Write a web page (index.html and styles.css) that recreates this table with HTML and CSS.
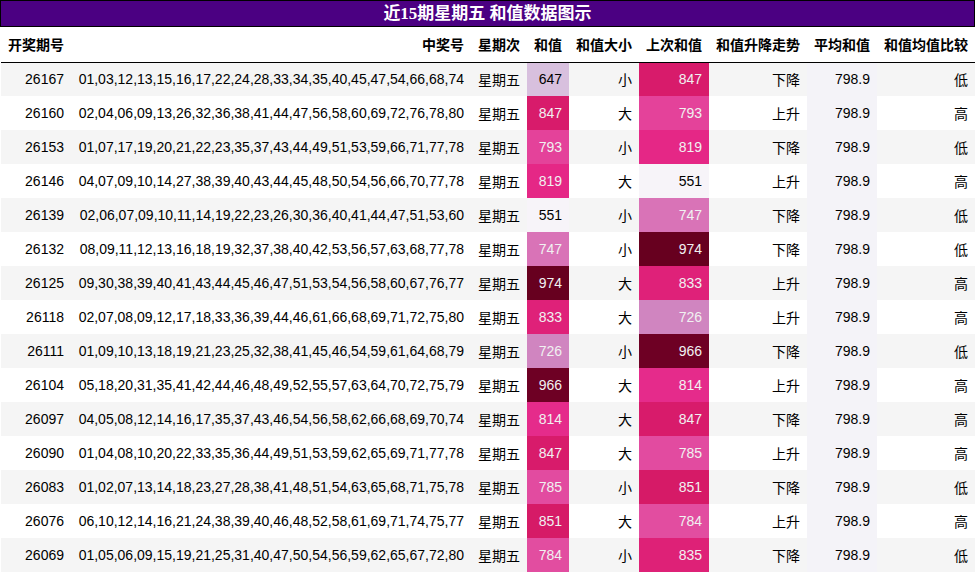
FILE: index.html
```html
<!DOCTYPE html>
<html lang="zh">
<head>
<meta charset="utf-8">
<title>近15期星期五 和值数据图示</title>
<link rel="stylesheet" href="styles.css">
</head>
<body>
<div class="wrap">
  <div class="title">近15期星期五 和值数据图示</div>
  <table class="grid">
    <thead>
      <tr>
        <th class="left">开奖期号</th>
        <th class="nums">中奖号</th>
        <th>星期次</th>
        <th>和值</th>
        <th>和值大小</th>
        <th>上次和值</th>
        <th>和值升降走势</th>
        <th>平均和值</th>
        <th>和值均值比较</th>
      </tr>
    </thead>
    <tbody>
      <tr><td>26167</td><td>01,03,12,13,15,16,17,22,24,28,33,34,35,40,45,47,54,66,68,74</td><td>星期五</td><td style="background:#d8c0de">647</td><td>小</td><td class="lt" style="background:#d81b6b">847</td><td>下降</td><td class="avg">798.9</td><td>低</td></tr>
      <tr><td>26160</td><td>02,04,06,09,13,26,32,36,38,41,44,47,56,58,60,69,72,76,78,80</td><td>星期五</td><td class="lt" style="background:#d81b6b">847</td><td>大</td><td class="lt" style="background:#e4429a">793</td><td>上升</td><td class="avg">798.9</td><td>高</td></tr>
      <tr><td>26153</td><td>01,07,17,19,20,21,22,23,35,37,43,44,49,51,53,59,66,71,77,78</td><td>星期五</td><td class="lt" style="background:#e4429a">793</td><td>小</td><td class="lt" style="background:#e52786">819</td><td>下降</td><td class="avg">798.9</td><td>低</td></tr>
      <tr><td>26146</td><td>04,07,09,10,14,27,38,39,40,43,44,45,48,50,54,56,66,70,77,78</td><td>星期五</td><td class="lt" style="background:#e52786">819</td><td>大</td><td style="background:#f7f4f9">551</td><td>上升</td><td class="avg">798.9</td><td>高</td></tr>
      <tr><td>26139</td><td>02,06,07,09,10,11,14,19,22,23,26,30,36,40,41,44,47,51,53,60</td><td>星期五</td><td style="background:#f7f4f9">551</td><td>小</td><td class="lt" style="background:#d973b7">747</td><td>下降</td><td class="avg">798.9</td><td>低</td></tr>
      <tr><td>26132</td><td>08,09,11,12,13,16,18,19,32,37,38,40,42,53,56,57,63,68,77,78</td><td>星期五</td><td class="lt" style="background:#d973b7">747</td><td>小</td><td class="lt" style="background:#67001f">974</td><td>下降</td><td class="avg">798.9</td><td>低</td></tr>
      <tr><td>26125</td><td>09,30,38,39,40,41,43,44,45,46,47,51,53,54,56,58,60,67,76,77</td><td>星期五</td><td class="lt" style="background:#67001f">974</td><td>大</td><td class="lt" style="background:#df2179">833</td><td>上升</td><td class="avg">798.9</td><td>高</td></tr>
      <tr><td>26118</td><td>02,07,08,09,12,17,18,33,36,39,44,46,61,66,68,69,71,72,75,80</td><td>星期五</td><td class="lt" style="background:#df2179">833</td><td>大</td><td class="lt" style="background:#d085c0">726</td><td>上升</td><td class="avg">798.9</td><td>高</td></tr>
      <tr><td>26111</td><td>01,09,10,13,18,19,21,23,25,32,38,41,45,46,54,59,61,64,68,79</td><td>星期五</td><td class="lt" style="background:#d085c0">726</td><td>小</td><td class="lt" style="background:#6e0024">966</td><td>下降</td><td class="avg">798.9</td><td>低</td></tr>
      <tr><td>26104</td><td>05,18,20,31,35,41,42,44,46,48,49,52,55,57,63,64,70,72,75,79</td><td>星期五</td><td class="lt" style="background:#6e0024">966</td><td>大</td><td class="lt" style="background:#e52b8b">814</td><td>上升</td><td class="avg">798.9</td><td>高</td></tr>
      <tr><td>26097</td><td>04,05,08,12,14,16,17,35,37,43,46,54,56,58,62,66,68,69,70,74</td><td>星期五</td><td class="lt" style="background:#e52b8b">814</td><td>大</td><td class="lt" style="background:#d81b6b">847</td><td>下降</td><td class="avg">798.9</td><td>高</td></tr>
      <tr><td>26090</td><td>01,04,08,10,20,22,33,35,36,44,49,51,53,59,62,65,69,71,77,78</td><td>星期五</td><td class="lt" style="background:#d81b6b">847</td><td>大</td><td class="lt" style="background:#e24ba0">785</td><td>上升</td><td class="avg">798.9</td><td>高</td></tr>
      <tr><td>26083</td><td>01,02,07,13,14,18,23,27,28,38,41,48,51,54,63,65,68,71,75,78</td><td>星期五</td><td class="lt" style="background:#e24ba0">785</td><td>小</td><td class="lt" style="background:#d61a67">851</td><td>下降</td><td class="avg">798.9</td><td>低</td></tr>
      <tr><td>26076</td><td>06,10,12,14,16,21,24,38,39,40,46,48,52,58,61,69,71,74,75,77</td><td>星期五</td><td class="lt" style="background:#d61a67">851</td><td>大</td><td class="lt" style="background:#e24da0">784</td><td>上升</td><td class="avg">798.9</td><td>高</td></tr>
      <tr><td>26069</td><td>01,05,06,09,15,19,21,25,31,40,47,50,54,56,59,62,65,67,72,80</td><td>星期五</td><td class="lt" style="background:#e24da0">784</td><td>小</td><td class="lt" style="background:#de2177">835</td><td>下降</td><td class="avg">798.9</td><td>低</td></tr>
    </tbody>
  </table>
</div>
</body>
</html>
```
FILE: styles.css
```css
html, body {
  margin: 0;
  padding: 0;
  background: #ffffff;
}

.wrap {
  display: inline-block;
  font-family: "Liberation Sans", "Noto Sans CJK SC", sans-serif;
}

.title {
  background: #4b0082;
  color: #ffffff;
  border: 1px solid #000000;
  height: 25px;
  line-height: 25px;
  text-align: center;
  font-family: "Liberation Serif", "Noto Sans CJK SC", serif;
  font-weight: bold;
  font-size: 17px;
}

.grid {
  border-collapse: collapse;
  border-spacing: 0;
  font-size: 14px;
  color: #000000;
  margin-left: 1px;
}

.grid th {
  height: 35px;
  padding: 0 7px;
  text-align: right;
  font-weight: bold;
  white-space: nowrap;
  border-bottom: 1px solid #000000;
  background: #ffffff;
  box-sizing: border-box;
}

.grid th.left {
  text-align: left;
}

.grid th.nums {
  width: 400px;
}

.grid td {
  height: 34px;
  padding: 0 7px;
  text-align: right;
  white-space: nowrap;
  box-sizing: border-box;
}

.grid tbody tr:nth-child(odd) {
  background: #f5f5f5;
}

.grid tbody tr:nth-child(even) {
  background: #ffffff;
}

.grid td.lt {
  color: #f1f1f1;
}

.grid td.avg {
  background: #f4f3f8;
}
```
